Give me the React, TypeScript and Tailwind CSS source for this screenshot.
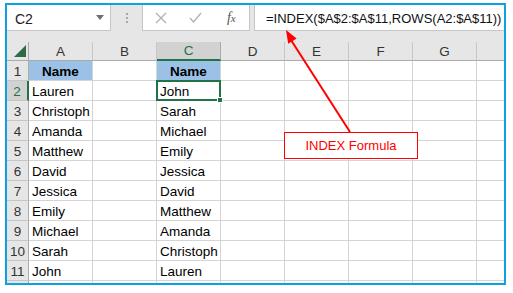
import React from "react";

const colA = ["Lauren", "Christoph", "Amanda", "Matthew", "David", "Jessica", "Emily", "Michael", "Sarah", "John"];
const colC = ["John", "Sarah", "Michael", "Emily", "Jessica", "David", "Matthew", "Amanda", "Christoph", "Lauren"];
const letters = ["A", "B", "C", "D", "E", "F", "G"];

function Toolbar() {
  return (
    <div className="flex h-[37px] shrink-0 items-start bg-[#e6e6e6]">
      {/* Name box */}
      <div className="flex h-[26px] w-[104px] items-center justify-between border-r border-b border-[#c6c6c6] bg-white pl-[8px] pr-[6px] pt-[3px] text-[14px] text-[#222]">
        <span>C2</span>
        <svg width="8" height="5" viewBox="0 0 8 5" className="-mt-[3px]">
          <path d="M0 0 L8 0 L4 5 Z" fill="#6f6f6f" />
        </svg>
      </div>
      <div className="flex h-[26px] w-[31px] flex-col items-center justify-center gap-[2px]">
        <span className="h-[2px] w-[2px] bg-[#a8a8a8]" />
        <span className="h-[2px] w-[2px] bg-[#a8a8a8]" />
        <span className="h-[2px] w-[2px] bg-[#a8a8a8]" />
      </div>
      {/* cancel / enter / fx */}
      <div className="flex h-[26px] w-[108px] items-center border-x border-b border-[#c6c6c6] bg-white">
        <div className="flex w-[36px] justify-center">
          <svg width="12" height="12" viewBox="0 0 12 12">
            <path d="M1 1 L11 11 M11 1 L1 11" stroke="#b3b3b3" strokeWidth="1.4" fill="none" />
          </svg>
        </div>
        <div className="flex w-[36px] justify-center">
          <svg width="13" height="11" viewBox="0 0 13 11">
            <path d="M1 6 L4.5 10 L12 1" stroke="#b3b3b3" strokeWidth="1.4" fill="none" />
          </svg>
        </div>
        <div className="flex w-[36px] justify-center font-['Liberation_Serif',serif] text-[14px] italic text-[#555]">
          <span>
            f<span className="text-[11px]">x</span>
          </span>
        </div>
      </div>
      <div className="w-[4px]" />
      {/* formula */}
      <div className="flex h-[26px] flex-1 items-center border-l border-b border-[#c6c6c6] bg-white pl-[11px] pt-[3px] text-[13px] text-[#111]">
        =INDEX($A$2:$A$11,ROWS(A2:$A$11))
      </div>
    </div>
  );
}

function HeaderRow() {
  return (
    <div className="flex h-[19px] shrink-0 bg-[#e6e6e6] text-[13.5px] text-[#333]">
      <div className="relative w-[22px] shrink-0 border-r border-b border-[#ababab]">
        <svg className="absolute right-[2px] bottom-[3px]" width="12" height="12" viewBox="0 0 12 12">
          <path d="M12 0 L12 12 L0 12 Z" fill="#2e6c45" />
        </svg>
      </div>
      {letters.map((l) =>
        l === "C" ? (
          <div
            key={l}
            className="flex w-[64px] shrink-0 items-center justify-center border-r border-b-2 border-r-[#ababab] border-b-[#217346] bg-[#d2d2d2] pt-[2px] text-[#217346]"
          >
            {l}
          </div>
        ) : (
          <div key={l} className="flex w-[64px] shrink-0 items-center justify-center border-r border-b border-[#c6c6c6] border-b-[#ababab] pt-[2px]">
            {l}
          </div>
        )
      )}
      <div className="flex-1 border-b border-[#ababab]" />
    </div>
  );
}

function Cell({ children, blue, selected }: { children?: React.ReactNode; blue?: boolean; selected?: boolean }) {
  return (
    <div
      className={
        blue
          ? "relative flex w-[64px] shrink-0 items-center justify-center border-r border-b border-[#d4d4d4] bg-[#9bc2e6] pt-[4px] font-bold text-black"
          : "relative flex w-[64px] shrink-0 items-center border-r border-b border-[#d4d4d4] pl-[3px] pt-[4px] text-black"
      }
    >
      <span>{children}</span>
      {selected && (
        <div className="absolute -top-px -left-px -right-px -bottom-px z-10 border-2 border-[#217346]">
          <div className="absolute -right-[4px] -bottom-[4px] h-[6px] w-[6px] border border-white bg-[#217346]" />
        </div>
      )}
    </div>
  );
}

function Rows() {
  const rows = Array.from({ length: 12 }, (_, i) => i + 1);
  return (
    <div className="flex flex-col text-[13.5px]">
      {rows.map((r) => (
        <div key={r} className="flex h-[20px] shrink-0">
          {r === 2 ? (
            <div className="flex w-[22px] shrink-0 items-center justify-center border-r-2 border-b border-r-[#217346] border-b-[#c6c6c6] bg-[#d2d2d2] pt-[3px] text-[#217346]">
              {r}
            </div>
          ) : (
            <div className="flex w-[22px] shrink-0 items-center justify-center border-r border-b border-r-[#ababab] border-b-[#c6c6c6] bg-[#e6e6e6] pt-[3px] text-[#333]">
              {r <= 11 ? r : ""}
            </div>
          )}
          <Cell blue={r === 1}>{r === 1 ? "Name" : r <= 11 ? colA[r - 2] : ""}</Cell>
          <Cell />
          <Cell blue={r === 1} selected={r === 2}>
            {r === 1 ? "Name" : r <= 11 ? colC[r - 2] : ""}
          </Cell>
          <Cell />
          <Cell />
          <Cell />
          <Cell />
          <div className="flex-1 border-b border-[#d4d4d4]" />
        </div>
      ))}
    </div>
  );
}

export default function App() {
  return (
    <div className="relative h-[293px] w-[513px] overflow-hidden bg-white font-['Liberation_Sans',Arial,sans-serif]">
      <div className="ml-[5px] mt-[3px] flex h-[282px] w-[501px] flex-col overflow-hidden border-2 border-[#0ea0e0] bg-white">
        <Toolbar />
        <HeaderRow />
        <Rows />
      </div>

      {/* callout arrow */}
      <svg className="pointer-events-none absolute top-0 left-0" width="513" height="293" viewBox="0 0 513 293">
        <line x1="350" y1="132" x2="291" y2="40" stroke="#ff0000" strokeWidth="2" />
        <path d="M286 30 L288.2 43.8 L296.6 38.4 Z" fill="#ff0000" />
      </svg>
      <div className="absolute top-[132px] left-[284px] flex h-[27px] w-[134px] items-center justify-center border-[1.5px] border-[#ff0000] bg-white text-[13px] text-[#ff0000]">
        INDEX Formula
      </div>
    </div>
  );
}
